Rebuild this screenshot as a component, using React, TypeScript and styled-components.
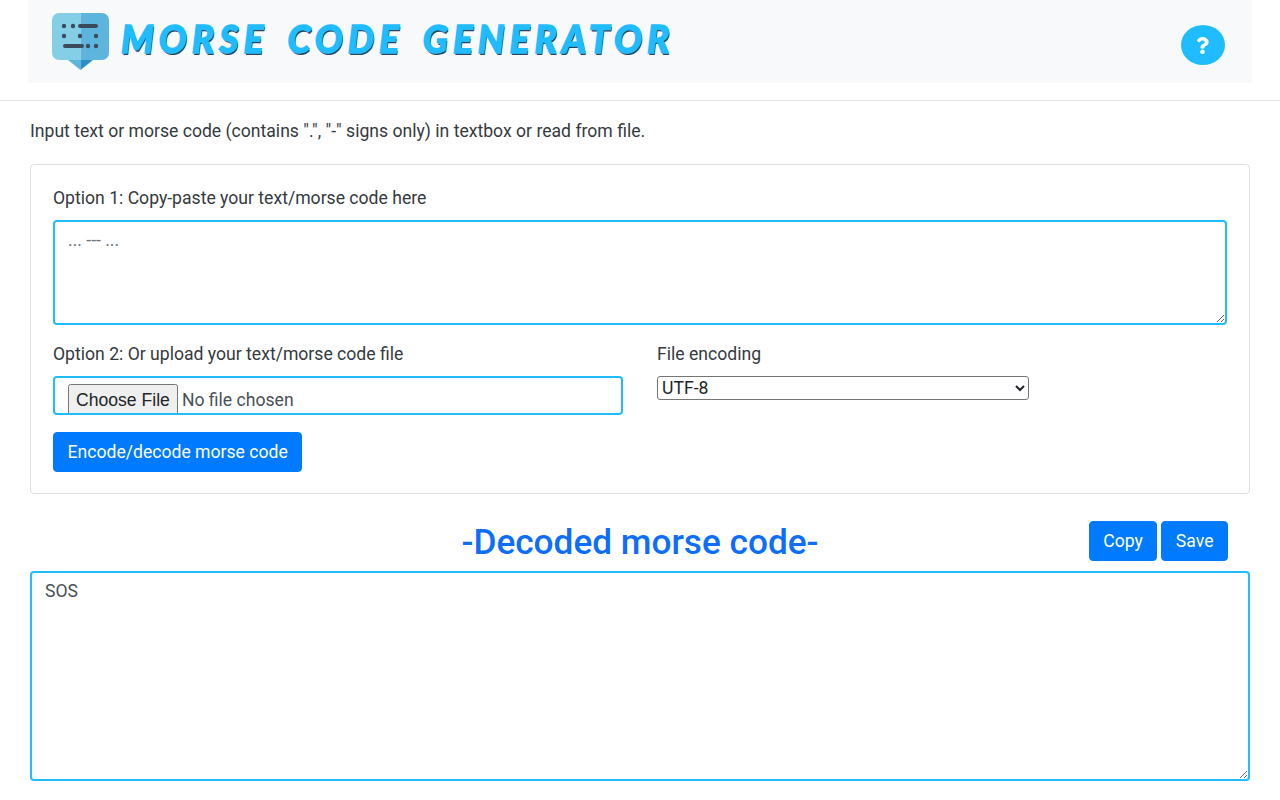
import React from 'react';
import styled, {createGlobalStyle} from 'styled-components';
import {FaQuestion} from 'react-icons/fa';

const ACCENT = '#1fbcff';
const BLUE = '#007bff';
const FONT_SIZE = '17.6px';

const GlobalStyle = createGlobalStyle`
  html, body {
    margin: 0;
    padding: 0;
    background: #fff;
    height: 800px;
    overflow: hidden;
  }
  body {
    font-family: Roboto, "Liberation Sans", sans-serif;
    font-size: ${FONT_SIZE};
    line-height: 26px;
    color: #343a40;
  }
  * {
    box-sizing: border-box;
  }
`;

const LogoIcon = () => (
  <svg width="58" height="58" viewBox="0 0 58 58">
    <path d="M7 0h21.500v47H7a7 7 0 0 1-7-7V7a7 7 0 0 1 7-7z" fill="#85cfe6" />
    <path d="M28.500 0H50a7 7 0 0 1 7 7v33a7 7 0 0 1-7 7H28.500z" fill="#5db5dd" />
    <path d="M16 47h12.500v10z" fill="#5db5dd" />
    <path d="M41 47H28.500v10z" fill="#2a8fcb" />
    <g fill="#3b4a5c">
      <circle cx="12" cy="13" r="2.200" />
      <circle cx="21" cy="13" r="2.200" />
      <rect x="26" y="11" width="20" height="4" rx="2" />
      <circle cx="12" cy="23" r="2.200" />
      <circle cx="28" cy="23" r="2.200" />
      <circle cx="44" cy="23" r="2.200" />
      <rect x="11" y="31" width="21" height="4" rx="2" />
      <circle cx="36" cy="33" r="2.200" />
      <circle cx="44" cy="33" r="2.200" />
    </g>
  </svg>
);

const HeaderBar = styled.header`
  height: 83px;
  margin: 0 28px;
  padding: 13px 27px 0 24px;
  background: #f8f9fa;
  display: flex;
  align-items: flex-start;
  justify-content: space-between;
`;

const Brand = styled.div`
  display: flex;
  align-items: flex-start;
  gap: 11px;
`;

const BrandTitle = styled.div`
  margin-top: 3px;
  font-family: Lato, "Open Sans", sans-serif;
  font-size: 37px;
  line-height: 46px;
  font-weight: 900;
  font-style: italic;
  letter-spacing: 5.05px;
  word-spacing: 6px;
  white-space: nowrap;
  text-transform: uppercase;
  color: ${ACCENT};
  -webkit-text-stroke: 1.4px ${ACCENT};
  text-shadow: 1px 2px 0 #2f4254;
`;

const HelpButton = styled.button`
  display: flex;
  align-items: center;
  justify-content: center;
  width: 44px;
  height: 40px;
  margin-top: 12px;
  padding: 0 1px 0 0;
  border: none;
  border-radius: 50%;
  background: ${ACCENT};
  color: #fff;
  font-size: 17px;
`;

const Divider = styled.hr`
  margin: 17px 0 0;
  border: none;
  border-top: 1px solid #e3e3e3;
`;

const Main = styled.main`
  padding: 17px 30px 0;
`;

const Intro = styled.p`
  margin: 0 0 20px;
`;

const Card = styled.section`
  height: 330px;
  padding: 20px 22px;
  border: 1px solid rgba(0, 0, 0, 0.125);
  border-radius: 4px;
`;

const FieldLabel = styled.label`
  display: block;
  margin-bottom: 9px;
`;

const CodeArea = styled.textarea<{$height: number}>`
  display: block;
  width: 100%;
  height: ${p => p.$height}px;
  padding: 6px 13px;
  border: 2px solid ${ACCENT};
  border-radius: 4px;
  outline: none;
  font-family: Roboto, "Liberation Sans", sans-serif;
  font-size: ${FONT_SIZE};
  line-height: 24px;
  color: #495057;
  background: #fff;

  &::placeholder {
    color: #6c757d;
    opacity: 1;
  }
`;

const OptionsRow = styled.div`
  display: grid;
  grid-template-columns: 570px 372px;
  column-gap: 34px;
  margin-top: 16px;
`;

const FileBox = styled.div`
  height: 39px;
  padding: 6px 13px 0;
  border: 2px solid ${ACCENT};
  border-radius: 4px;
  overflow: hidden;
`;

const FileInput = styled.input`
  display: block;
  width: 100%;
  height: 34px;
  font-family: Roboto, "Liberation Sans", sans-serif;
  font-size: ${FONT_SIZE};
  line-height: 24px;
  color: #495057;

  &::file-selector-button {
    height: 32px;
    color: #212529;
  }
`;

const EncodingSelect = styled.select`
  display: block;
  width: 100%;
  height: 24px;
  border-radius: 3px;
  font-family: Roboto, "Liberation Sans", sans-serif;
  font-size: ${FONT_SIZE};
  color: #212529;
  background: #fff;
`;

const PrimaryButton = styled.button`
  height: 40px;
  padding: 0 13.5px;
  border: 1px solid ${BLUE};
  border-radius: 4px;
  background: ${BLUE};
  color: #fff;
  font-family: Roboto, "Liberation Sans", sans-serif;
  font-size: ${FONT_SIZE};
  font-weight: 400;
`;

const SubmitRow = styled.div`
  margin-top: 17px;
`;

const ResultHead = styled.div`
  display: grid;
  grid-template-columns: 1fr auto 1fr;
  align-items: start;
  height: 40px;
  margin: 27px 0 10px;
`;

const ResultTitle = styled.h2`
  grid-column: 2;
  margin: 0;
  font-size: 35.2px;
  line-height: 42px;
  font-weight: 500;
  color: #0d6efd;
`;

const ResultActions = styled.div`
  grid-column: 3;
  display: flex;
  justify-content: flex-end;
  gap: 4px;
  padding-right: 22px;
`;

const App = () => (
  <>
    <GlobalStyle />
    <HeaderBar>
      <Brand>
        <LogoIcon />
        <BrandTitle>Morse Code Generator</BrandTitle>
      </Brand>
      <HelpButton type="button" aria-label="Help">
        <FaQuestion />
      </HelpButton>
    </HeaderBar>
    <Divider />
    <Main>
      <Intro>Input text or morse code (contains ".", "-" signs only) in textbox or read from file.</Intro>
      <Card>
        <FieldLabel>Option 1: Copy-paste your text/morse code here</FieldLabel>
        <CodeArea $height={105} placeholder="... --- ..." />
        <OptionsRow>
          <div>
            <FieldLabel>Option 2: Or upload your text/morse code file</FieldLabel>
            <FileBox>
              <FileInput type="file" />
            </FileBox>
          </div>
          <div>
            <FieldLabel>File encoding</FieldLabel>
            <EncodingSelect defaultValue="UTF-8">
              <option>UTF-8</option>
            </EncodingSelect>
          </div>
        </OptionsRow>
        <SubmitRow>
          <PrimaryButton type="button">Encode/decode morse code</PrimaryButton>
        </SubmitRow>
      </Card>
      <ResultHead>
        <ResultTitle>-Decoded morse code-</ResultTitle>
        <ResultActions>
          <PrimaryButton type="button">Copy</PrimaryButton>
          <PrimaryButton type="button">Save</PrimaryButton>
        </ResultActions>
      </ResultHead>
      <CodeArea $height={210} defaultValue="SOS" />
    </Main>
  </>
);

export default App;
